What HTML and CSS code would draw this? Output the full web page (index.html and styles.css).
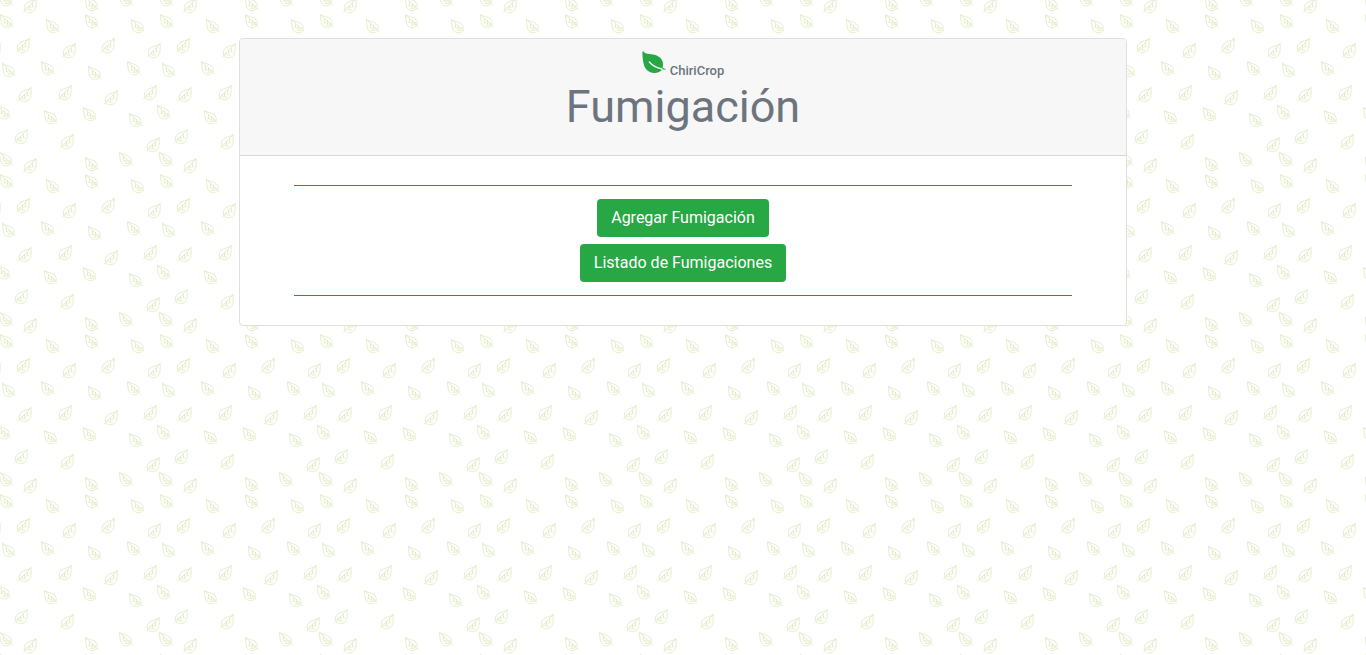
FILE: index.html
```html
<!DOCTYPE html>
<html lang="es">
<head>
<meta charset="utf-8">
<meta name="viewport" content="width=device-width, initial-scale=1">
<title>Fumigación</title>
<link rel="stylesheet" href="styles.css">
</head>
<body class="page">
<main class="card">
  <header class="card-header">
    <div class="brand">
      <svg class="brand-leaf" viewBox="0 0 24 23" aria-hidden="true">
        <path fill="#28a745" d="M.5.8C.6.2 1 0 1.500.5 3 3 6.500 2.800 10 3.300c6 .8 10.500 4.200 11 9 .1 1.600-.1 3.200-.4 4.400l3 1.200-.2.900-3.200-.5C18.500 21 15.500 22 12 21.900 7 21.600 3 18.500 1.700 13 .8 9 .2 4.500.5.8z"/>
        <path fill="none" stroke="#f7f7f7" stroke-width="1.400" stroke-linecap="round" d="M7.300 11c2.500 3 6 5.600 12.700 7"/>
      </svg>
      <span class="brand-name">ChiriCrop</span>
    </div>
    <h1 class="title">Fumigación</h1>
  </header>
  <div class="card-body">
    <hr class="rule">
    <nav class="actions">
      <button class="btn" type="button">Agregar Fumigación</button>
      <button class="btn" type="button">Listado de Fumigaciones</button>
    </nav>
    <hr class="rule">
  </div>
</main>
</body>
</html>
```
FILE: styles.css
```css
*, *::before, *::after { box-sizing: border-box; }

.page {
  margin: 0;
  padding: 38px 0;
  font-family: Roboto, "Liberation Sans", sans-serif;
  font-size: 16px;
  line-height: 24px;
  color: #6c757d;
  background-color: #fff;
  background-image: url("data:image/svg+xml,%3Csvg xmlns='http://www.w3.org/2000/svg' xmlns:xlink='http://www.w3.org/1999/xlink' width='160' height='160'%3E%3Cdefs%3E%3Cg id='a' fill='none' stroke='%23dfecc4' stroke-width='.9'%3E%3Cpath d='M.5.5C3 2.800 8 2.200 11 5.500c1.700 2.200 1.500 4.800 .4 6.500-2 2-5.400 2.400-7.900 .6C.8 10.200 .8 5 .5 .5L13.500 13M4.500 4.500v3.500M7.500 6v4.500M10 8v3.500M3.500 8.500l3 .5M5.500 11.500l4-.5'/%3E%3C/g%3E%3Cg id='b' fill='none' stroke='%23dfecc4' stroke-width='.9'%3E%3Cpath d='M13.200 .5C10.700 3.200 6 2.700 2.900 5.700.8 8 .8 11.200 2.400 13.300c2.600 2.200 6.400 1.900 8.700-.5C13.800 9.700 13 4.700 13.200 .5L.2 14.300M9.500 4.500v3.500M6.500 7v4M4 9v3M10.800 8.700l-3.300 .3M9 12h-4'/%3E%3C/g%3E%3C/defs%3E%3Cg id='t'%3E%3Cuse xlink:href='%23a' x='0' y='14'/%3E%3Cuse xlink:href='%23a' x='85' y='14'/%3E%3Cuse xlink:href='%23a' x='160' y='14'/%3E%3Cuse xlink:href='%23a' x='46' y='19'/%3E%3Cuse xlink:href='%23a' x='131' y='19'/%3E%3Cuse xlink:href='%23a' x='41' y='61'/%3E%3Cuse xlink:href='%23a' x='2' y='63'/%3E%3Cuse xlink:href='%23a' x='127' y='61'/%3E%3Cuse xlink:href='%23a' x='88' y='66'/%3E%3Cuse xlink:href='%23a' x='-3' y='105'/%3E%3Cuse xlink:href='%23a' x='157' y='105'/%3E%3Cuse xlink:href='%23a' x='44' y='110'/%3E%3Cuse xlink:href='%23a' x='83' y='107'/%3E%3Cuse xlink:href='%23a' x='129' y='113'/%3E%3Cuse xlink:href='%23a' x='-1' y='152'/%3E%3Cuse xlink:href='%23a' x='-1' y='-8'/%3E%3Cuse xlink:href='%23a' x='159' y='152'/%3E%3Cuse xlink:href='%23a' x='85' y='157'/%3E%3Cuse xlink:href='%23a' x='85' y='-3'/%3E%3Cuse xlink:href='%23a' x='119' y='152'/%3E%3Cuse xlink:href='%23a' x='119' y='-8'/%3E%3Cuse xlink:href='%23b' x='16' y='38'/%3E%3Cuse xlink:href='%23b' x='62' y='43'/%3E%3Cuse xlink:href='%23b' x='101' y='38'/%3E%3Cuse xlink:href='%23b' x='147' y='43'/%3E%3Cuse xlink:href='%23b' x='-13' y='43'/%3E%3Cuse xlink:href='%23b' x='18' y='87'/%3E%3Cuse xlink:href='%23b' x='58' y='85'/%3E%3Cuse xlink:href='%23b' x='104' y='90'/%3E%3Cuse xlink:href='%23b' x='143' y='85'/%3E%3Cuse xlink:href='%23b' x='14' y='129'/%3E%3Cuse xlink:href='%23b' x='60' y='134'/%3E%3Cuse xlink:href='%23b' x='146' y='137'/%3E%3Cuse xlink:href='%23b' x='23' y='158'/%3E%3Cuse xlink:href='%23b' x='23' y='-2'/%3E%3C/g%3E%3C/svg%3E");
}

.card {
  width: 65%;
  margin: 0 auto;
  background: #fff;
  border: 1px solid #dfdfdf;
  border-radius: 4px;
  text-align: center;
}

.card-header {
  padding: 12px 20px 20px;
  background: #f7f7f7;
  border-bottom: 1px solid #d8d8d8;
  border-radius: 3px 3px 0 0;
}

.brand {
  display: flex;
  justify-content: center;
  align-items: flex-end;
  gap: 4px;
}

.brand-leaf {
  width: 24px;
  height: 23px;
  margin-bottom: 5px;
}

.brand-name {
  font-size: 13px;
  font-weight: 500;
  line-height: 16px;
}

.title {
  margin: 0;
  font-size: 45px;
  font-weight: 400;
  line-height: 56px;
}

.card-body { padding: 29px 54px; }

.rule {
  height: 1px;
  margin: 0;
  border: 0;
  background: #28943f;
}

.actions {
  display: flex;
  flex-direction: column;
  align-items: center;
  gap: 7px;
  padding: 13px 0;
}

.btn {
  padding: 7px 14px;
  font: inherit;
  color: #fff;
  background: #28a745;
  border: 0;
  border-radius: 4px;
  cursor: pointer;
}
```
